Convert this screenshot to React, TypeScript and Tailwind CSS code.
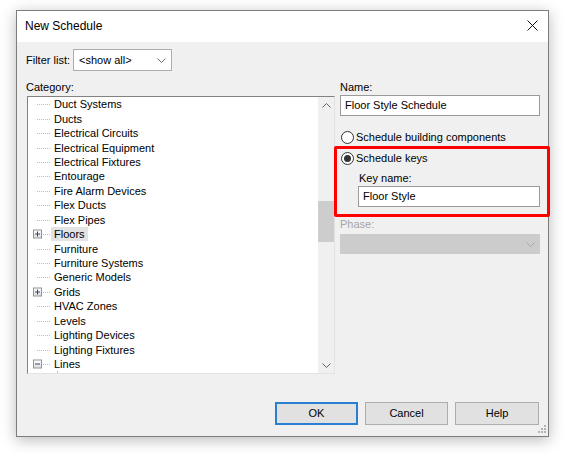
import React from 'react';

type TreeItem = {
  label: string;
  toggle?: 'plus' | 'minus';
  selected?: boolean;
};

const categories: TreeItem[] = [
  { label: 'Duct Systems' },
  { label: 'Ducts' },
  { label: 'Electrical Circuits' },
  { label: 'Electrical Equipment' },
  { label: 'Electrical Fixtures' },
  { label: 'Entourage' },
  { label: 'Fire Alarm Devices' },
  { label: 'Flex Ducts' },
  { label: 'Flex Pipes' },
  { label: 'Floors', toggle: 'plus', selected: true },
  { label: 'Furniture' },
  { label: 'Furniture Systems' },
  { label: 'Generic Models' },
  { label: 'Grids', toggle: 'plus' },
  { label: 'HVAC Zones' },
  { label: 'Levels' },
  { label: 'Lighting Devices' },
  { label: 'Lighting Fixtures' },
  { label: 'Lines', toggle: 'minus' },
];

function Chevron({ up, color = '#606060' }: { up?: boolean; color?: string }) {
  return (
    <svg width="9" height="5" viewBox="0 0 9 5" fill="none">
      <polyline
        points={up ? '0.5,4.5 4.5,0.5 8.5,4.5' : '0.5,0.5 4.5,4.5 8.5,0.5'}
        stroke={color}
        strokeWidth="1"
      />
    </svg>
  );
}

function ToggleBox({ kind }: { kind: 'plus' | 'minus' }) {
  return (
    <div className="absolute left-[5px] top-1/2 h-[9px] w-[9px] -translate-y-1/2 border border-[#919191] bg-gradient-to-b from-white to-[#dedede]">
      <svg width="7" height="7" viewBox="0 0 7 7" className="block">
        <line x1="1" y1="3.5" x2="6" y2="3.5" stroke="#2f4a7a" strokeWidth="1" />
        {kind === 'plus' ? <line x1="3.5" y1="1" x2="3.5" y2="6" stroke="#2f4a7a" strokeWidth="1" /> : null}
      </svg>
    </div>
  );
}

function TreeRow({ item }: { item: TreeItem }) {
  return (
    <div className="flex h-[14.44px] items-center">
      <div className="relative h-full w-[23px] shrink-0">
        <div className="absolute left-[9px] right-px top-1/2 border-t border-dotted border-[#bdbdbd]" />
        {item.toggle ? <ToggleBox kind={item.toggle} /> : null}
      </div>
      <span className={'px-[3px] leading-[14px] ' + (item.selected ? 'bg-[#e3e3e3]' : '')}>{item.label}</span>
    </div>
  );
}

function Radio({ checked, label }: { checked?: boolean; label: string }) {
  return (
    <div className="flex h-[14px] items-center gap-[2px] pl-px">
      <div className="flex h-[13px] w-[13px] items-center justify-center rounded-full border border-[#333333] bg-white">
        {checked ? <div className="h-[7px] w-[7px] rounded-full bg-[#333333]" /> : null}
      </div>
      <span className="leading-[14px]">{label}</span>
    </div>
  );
}

function DialogButton({ label, primary, wide }: { label: string; primary?: boolean; wide?: boolean }) {
  return (
    <button
      className={[
        'flex h-[23px] items-center justify-center bg-[#e1e1e1] text-[11px] text-black',
        wide ? 'w-[84px]' : 'w-[83px]',
        primary ? 'border-2 border-[#2b7fd2]' : 'border border-[#adadad]',
      ].join(' ')}
    >
      {label}
    </button>
  );
}

export default function App() {
  return (
    <div className="h-[454px] w-[571px] bg-white pl-[16px] pt-[10px] font-['Liberation_Sans',Arial,sans-serif] text-[11px] text-black">
      <div className="relative flex h-[427px] w-[533px] flex-col border border-[#7d7d7d] bg-[#f0f0f0] shadow-[0_3px_14px_rgba(0,0,0,0.28)]">
        {/* title bar */}
        <div className="flex h-[31px] shrink-0 items-center justify-between bg-white pl-[8px] pr-[10px]">
          <span className="-mt-[2px] text-[12px]">New Schedule</span>
          <svg width="11" height="11" viewBox="0 0 11 11" className="-mt-[2px]">
            <line x1="0.5" y1="0.5" x2="10.5" y2="10.5" stroke="#111" strokeWidth="1" />
            <line x1="10.5" y1="0.5" x2="0.5" y2="10.5" stroke="#111" strokeWidth="1" />
          </svg>
        </div>

        <div className="flex flex-1 flex-col pl-[9px] pr-[8px] pt-[7px]">
          {/* filter */}
          <div className="flex h-[22px] items-center">
            <span className="w-[47px]">Filter list:</span>
            <div className="flex h-[22px] w-[99px] items-center justify-between border border-[#adadad] bg-white pl-[5px] pr-[5px]">
              <span>&lt;show all&gt;</span>
              <Chevron color="#707070" />
            </div>
          </div>

          <div className="mt-[10px] flex gap-[5px]">
            {/* category tree */}
            <div className="flex w-[309px] flex-col">
              <span className="h-[13px] leading-[13px]">Category:</span>
              <div className="ml-px mt-[2px] flex h-[278px] border border-b-[#e3e3e3] border-l-[#828282] border-r-[#e3e3e3] border-t-[#828282] bg-white">
                <div className="flex-1 overflow-hidden">
                  {categories.map((c) => (
                    <TreeRow key={c.label} item={c} />
                  ))}
                  <div className="relative h-[14px]">
                    <div className="absolute bottom-0 left-[29px] top-0 border-l border-dotted border-[#bdbdbd]" />
                  </div>
                </div>
                <div className="flex w-[16px] flex-col bg-[#f0f0f0]">
                  <div className="flex h-[17px] items-center justify-center">
                    <Chevron up />
                  </div>
                  <div className="flex-1">
                    <div className="mt-[87px] h-[41px] bg-[#cdcdcd]" />
                  </div>
                  <div className="flex h-[17px] items-center justify-center pt-[2px]">
                    <Chevron />
                  </div>
                </div>
              </div>
            </div>

            {/* schedule options */}
            <div className="flex w-[200px] flex-col">
              <span className="h-[13px] leading-[13px]">Name:</span>
              <div className="mt-px flex h-[21px] items-center border border-[#9a9a9a] bg-white pl-[4px]">
                Floor Style Schedule
              </div>
              <div className="mt-[14px]">
                <Radio label="Schedule building components" />
              </div>
              <div className="-ml-[6px] -mr-[10px] mt-[2px] rounded-[2px] border-[3px] border-[#ff0000] pb-[7px] pl-[3px] pr-[7px] pt-[2px]">
                <Radio checked label="Schedule keys" />
                <div className="ml-[18px] mt-[7px]">
                  <span className="block h-[13px] pl-px leading-[13px]">Key name:</span>
                  <div className="mt-px flex h-[21px] items-center border border-[#9a9a9a] bg-white pl-[4px]">
                    Floor Style
                  </div>
                </div>
              </div>
              <span className="mt-px h-[13px] leading-[13px] text-[#a6a6a6]">Phase:</span>
              <div className="mt-[3px] flex h-[20px] items-center justify-end border border-[#cccccc] bg-[#cccccc] pr-[4px]">
                <Chevron color="#a8a8a8" />
              </div>
            </div>
          </div>

          {/* action buttons */}
          <div className="mt-[28px] flex justify-end gap-[7px] pr-px">
            <DialogButton label="OK" primary />
            <DialogButton label="Cancel" />
            <DialogButton label="Help" wide />
          </div>
        </div>

        {/* size grip */}
        <svg width="9" height="9" viewBox="0 0 9 9" className="absolute bottom-[2px] right-px">
          <rect x="6" y="0" width="2" height="2" fill="#b5b5b5" />
          <rect x="3" y="3" width="2" height="2" fill="#b5b5b5" />
          <rect x="6" y="3" width="2" height="2" fill="#b5b5b5" />
          <rect x="0" y="6" width="2" height="2" fill="#b5b5b5" />
          <rect x="3" y="6" width="2" height="2" fill="#b5b5b5" />
          <rect x="6" y="6" width="2" height="2" fill="#b5b5b5" />
        </svg>
      </div>
    </div>
  );
}
